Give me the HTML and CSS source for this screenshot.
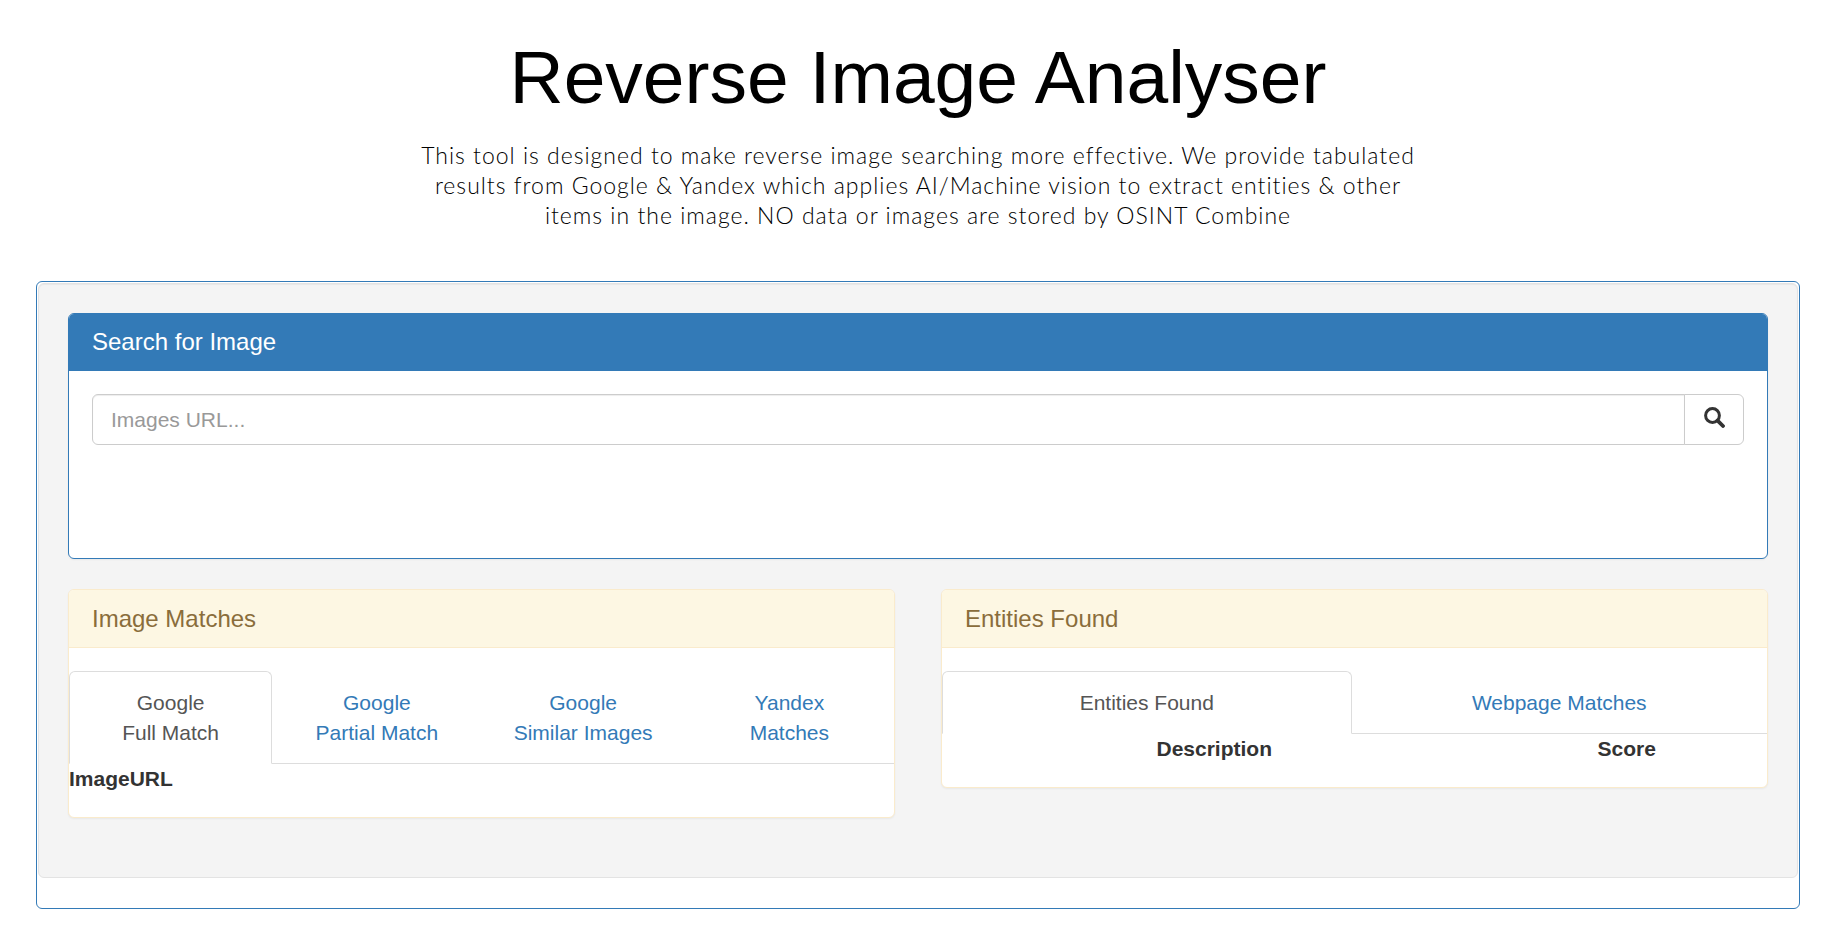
FILE: index.html
```html
<!DOCTYPE html>
<html lang="en">
<head>
    <meta charset="UTF-8">
    <meta name="viewport" content="width=device-width, initial-scale=1">
    <title>Reverse Image Analyser</title>
    <link rel="stylesheet" href="styles.css">
</head>
<body>
    <header class="page-header">
        <h1>Reverse Image Analyser</h1>
        <p>This tool is designed to make reverse image searching more effective. We provide tabulated<br>
        results from Google &amp; Yandex which applies AI/Machine vision to extract entities &amp; other<br>
        items in the image. NO data or images are stored by OSINT Combine</p>
    </header>

    <main class="app">
        <div class="well">
            <section class="panel panel-primary">
                <h2 class="panel-heading">Search for Image</h2>
                <div class="panel-body">
                    <form class="input-group">
                        <input type="text" class="form-control" id="imageUrl" placeholder="Images URL..." aria-label="Image URL">
                        <button type="submit" class="btn" aria-label="Search">
                            <svg class="icon" viewBox="0 0 21 21" fill="none" stroke="currentColor">
                                <circle cx="8.5" cy="8.5" r="6.9" stroke-width="3"></circle>
                                <line x1="13.6" y1="13.6" x2="19" y2="19" stroke-width="3.8" stroke-linecap="round"></line>
                            </svg>
                        </button>
                    </form>
                    <div class="preview"></div>
                </div>
            </section>

            <div class="row">
                <section class="panel panel-warning">
                    <h2 class="panel-heading">Image Matches</h2>
                    <div class="tab-body">
                        <nav class="nav-tabs">
                            <a href="#full" class="active">Google<br>Full Match</a>
                            <a href="#partial">Google<br>Partial Match</a>
                            <a href="#similar">Google<br>Similar Images</a>
                            <a href="#yandex">Yandex<br>Matches</a>
                        </nav>
                        <table class="matches" id="full">
                            <thead>
                                <tr><th>ImageURL</th></tr>
                            </thead>
                        </table>
                    </div>
                </section>

                <section class="panel panel-warning">
                    <h2 class="panel-heading">Entities Found</h2>
                    <div class="tab-body">
                        <nav class="nav-tabs">
                            <a href="#entities" class="active">Entities Found</a>
                            <a href="#webpages">Webpage Matches</a>
                        </nav>
                        <table class="entities" id="entities">
                            <thead>
                                <tr><th class="description">Description</th><th>Score</th></tr>
                            </thead>
                        </table>
                    </div>
                </section>
            </div>
        </div>
    </main>
</body>
</html>
```

FILE: styles.css
```css
* {
    box-sizing: border-box;
}
body {
    margin: 0;
    font-family: Arial, "Liberation Sans", sans-serif;
    font-size: 21px;
    line-height: 30px;
    color: #333;
    background: #fff;
}
a {
    color: #337ab7;
    text-decoration: none;
}

/* Page title */
.page-header {
    padding: 32px 36px 51px;
    text-align: center;
    color: #000;
}
.page-header h1 {
    margin: 0 0 18px;
    font-size: 75px;
    line-height: 90px;
    font-weight: normal;
}
.page-header p {
    margin: 0;
    font-family: Lato, sans-serif;
    font-size: 23px;
    font-weight: 300;
    letter-spacing: 1px;
}

/* Containers */
.app {
    margin: 0 36px 36px;
    padding: 1px 1px 30px;
    border: 1px solid #337ab7;
    border-radius: 6px;
}
.well {
    padding: 29px;
    background: #f4f4f4;
    border: 1px solid #e3e3e3;
    border-radius: 6px;
    box-shadow: inset 0 1px 1px rgba(0, 0, 0, 0.05);
}
.row {
    display: grid;
    grid-template-columns: 1fr 1fr;
    align-items: start;
    gap: 46px;
}

/* Panels */
.panel {
    margin-bottom: 30px;
    background: #fff;
    border: 1px solid #337ab7;
    border-radius: 6px;
    box-shadow: 0 1px 2px rgba(0, 0, 0, 0.05);
}
.panel-heading {
    margin: 0;
    padding: 15px 23px;
    font-size: 24px;
    line-height: 26px;
    font-weight: normal;
    border-bottom: 1px solid #337ab7;
    border-radius: 5px 5px 0 0;
}
.panel-primary .panel-heading {
    color: #fff;
    background: #337ab7;
}
.panel-warning {
    border-color: #faebcc;
}
.panel-warning .panel-heading {
    line-height: 27px;
    color: #8a6d3b;
    background: #fdf7e3;
    border-color: #faebcc;
}
.panel-body {
    padding: 23px;
}
.tab-body {
    padding: 23px 0;
}
.preview {
    min-height: 90px;
}

/* Search box */
.input-group {
    display: flex;
}
.form-control {
    flex: 1;
    min-width: 0;
    height: 51px;
    padding: 9px 18px;
    font: inherit;
    color: #555;
    background: #fff;
    border: 1px solid #ccc;
    border-radius: 6px 0 0 6px;
    box-shadow: inset 0 1px 1px rgba(0, 0, 0, 0.075);
}
.form-control::placeholder {
    color: #999;
    opacity: 1;
}
.btn {
    width: 60px;
    height: 51px;
    margin-left: -1px;
    padding: 0 0 4px;
    color: #333;
    background: #fff;
    border: 1px solid #ccc;
    border-radius: 0 6px 6px 0;
    cursor: pointer;
}
.icon {
    display: block;
    width: 21px;
    height: 21px;
    margin: 0 auto;
}

/* Tabs */
.nav-tabs {
    display: flex;
    border-bottom: 1px solid #ddd;
}
.nav-tabs a {
    flex: 1;
    margin: 0 3px -1px 0;
    padding: 16px 15px 15px;
    text-align: center;
    border: 1px solid transparent;
    border-radius: 6px 6px 0 0;
}
.nav-tabs .active {
    color: #555;
    background: #fff;
    border-color: #ddd;
    border-bottom-color: #fff;
}

/* Result tables */
table {
    width: 100%;
    border-collapse: collapse;
}
th {
    padding: 0;
}
.matches th {
    text-align: left;
}
.entities {
    table-layout: fixed;
}
.description {
    width: 66%;
}
```
